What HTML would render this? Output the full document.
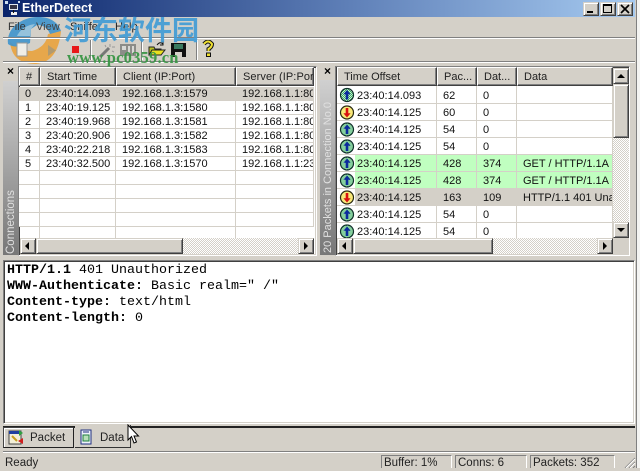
<!DOCTYPE html>
<html><head><meta charset="utf-8"><style>
html,body{margin:0;padding:0;background:#d4d0c8}
body{position:relative;width:640px;height:468px;overflow:hidden;font:11px "Liberation Sans",sans-serif;color:#111}
.a,.a *{box-sizing:border-box}
.a{position:absolute}
.t{position:absolute;white-space:nowrap;line-height:14px}
.sunk{border:1px solid;border-color:#808080 #fff #fff #808080;box-shadow:inset 1px 1px 0 #404040,inset -1px -1px 0 #d4d0c8}
.btn{position:absolute;box-sizing:border-box;background:#d4d0c8;border:1px solid;border-color:#d4d0c8 #404040 #404040 #d4d0c8;box-shadow:inset 1px 1px 0 #fff,inset -1px -1px 0 #808080}
.dith{position:absolute;background:repeating-conic-gradient(#d4d0c8 0 25%,#fff 0 50%) 0 0/2px 2px}
table{position:absolute;border-collapse:separate;border-spacing:0;table-layout:fixed;background:#fff}
td{box-sizing:border-box;padding:0 0 0 6px;border:solid #d4d0c8;border-width:0 1px 1px 0;white-space:nowrap;overflow:hidden;font-size:11px;line-height:12px;color:#111}
.l td{height:14px}
.r td{height:17px;padding-top:2px}
.r td:first-child{padding-left:20px}
.g td{background:#c0ffc0}.g td:first-child{background:linear-gradient(90deg,#fff 0 18px,#c0ffc0 18px)}
.s td{background:#d4d0c8}.s td:first-child{background:linear-gradient(90deg,#fff 0 18px,#d4d0c8 18px)}
.h{position:absolute;box-sizing:border-box;top:67px;height:19px;line-height:18px;background:#d4d0c8;border:1px solid;border-color:#fff #404040 #404040 #fff;box-shadow:inset -1px -1px 0 #808080;padding-left:6px;white-space:nowrap;overflow:hidden;font-size:11px;color:#222}
.strip{position:absolute;width:15px;background:linear-gradient(#d0d0d0,#777)}
.vt{position:absolute;white-space:nowrap;color:#e0e0e0;font-size:11px;transform-origin:0 0;transform:rotate(-90deg)}
.x{position:absolute;font:bold 12px "Liberation Sans",sans-serif;color:#000;line-height:10px}
.ar{position:absolute;width:0;height:0;border:solid transparent}
.m{position:absolute;left:7px;font:13.33px/16px "Liberation Mono",monospace;color:#000;white-space:pre}
.m b{font-weight:bold}
.p{position:absolute;box-sizing:border-box;top:455px;height:13px;border:1px solid;border-color:#808080 #fff #fff #808080;border-bottom:0;padding-left:2px;font-size:11.5px;line-height:15px;color:#222}
.sep{position:absolute;box-sizing:border-box;top:40px;width:2px;height:20px;border-left:1px solid #808080;border-right:1px solid #fff}
</style></head><body>

<!-- window frame -->
<div class="a" style="left:0;top:0;width:3px;height:468px;background:#d4d0c8"></div>
<div class="a" style="left:637px;top:0;width:3px;height:468px;background:#f4f4f2"></div>
<div class="a" style="left:636px;top:0;width:1px;height:468px;background:#808080"></div>

<!-- title bar -->
<div class="a" style="left:3px;top:0;width:632px;height:17px;background:linear-gradient(90deg,#0a246a,#5f80b8 55%,#a6caf0)"></div>
<svg class="a" style="left:4px;top:0" width="18" height="17" viewBox="0 0 18 17"><rect x="5" y="4" width="9" height="6" fill="#dfe6ee"/><rect x="6" y="5" width="7" height="4" fill="#334"/><rect x="7" y="12" width="6" height="3" fill="#eee"/><rect x="1" y="1" width="3" height="3" fill="#cde"/><rect x="14" y="1" width="2" height="2" fill="#cde"/><rect x="9" y="10" width="1" height="3" fill="#111"/></svg>
<div class="t" style="left:22px;top:1px;color:#fff;font-weight:bold;font-size:12.5px;line-height:15px">EtherDetect</div>
<div class="btn" style="left:583px;top:2px;width:16px;height:14px"><div class="a" style="left:3px;top:8px;width:6px;height:2px;background:#000"></div></div>
<div class="btn" style="left:600px;top:2px;width:16px;height:14px"><div class="a" style="left:2px;top:1px;width:9px;height:9px;border:1px solid #000;border-top-width:2px"></div></div>
<div class="btn" style="left:617px;top:2px;width:16px;height:14px"><svg class="a" style="left:2px;top:1px" width="10" height="10" viewBox="0 0 10 10"><path d="M1 1L9 9M9 1L1 9" stroke="#000" stroke-width="1.7"/></svg></div>

<!-- Watermark logo beneath menu text -->
<svg class="a" style="left:6px;top:14px" width="62" height="54" viewBox="0 0 62 54">
<path d="M4 28Q6 50 30 50Q52 48 55 17L42 20Q40 33 26 37Q14 37 4 28Z" fill="#e8a444" opacity=".95"/>
<path d="M2 30C0 14 16 3 32 3C44 3 52 8 55 17L44 20C42 14 37 11 31 11L25 15L24 29C15 33 7 34 2 30Z" fill="#3f94cc" opacity=".9"/>
<path d="M11 22C15 14 22 11 29 10L25 15L24 22Z" fill="#a8cce0" opacity=".8"/>
</svg>

<!-- menu -->
<div class="t" style="left:8px;top:20px;color:#333">File</div>
<div class="t" style="left:36px;top:20px;color:#444">View</div>
<div class="t" style="left:70px;top:20px;color:#222">Sniffer</div>
<div class="t" style="left:115px;top:20px;color:#222">Help</div>
<div class="a" style="left:3px;top:37px;width:632px;height:2px;border-top:1px solid #808080;border-bottom:1px solid #fff"></div>
<div class="a" style="left:3px;top:61px;width:632px;height:2px;border-top:1px solid #808080;border-bottom:1px solid #fff"></div>

<!-- toolbar -->
<svg class="a" style="left:14px;top:41px" width="20" height="18"><path d="M3 2H13V15H3Z" fill="#f0eee8" stroke="#999"/></svg>
<svg class="a" style="left:46px;top:44px" width="12" height="13"><path d="M2 1L10 6.5L2 12Z" fill="#b09a70"/></svg>
<div class="a" style="left:72px;top:46px;width:7px;height:7px;background:#e81818"></div>
<div class="sep" style="left:90px"></div>
<svg class="a" style="left:98px;top:42px" width="17" height="17"><path d="M2 15L11 6" stroke="#777" stroke-width="3"/><path d="M12 2v3M14 5h3M7 3l1 2M14 9l2 1" stroke="#999" fill="none"/></svg>
<div class="a" style="left:120px;top:44px;width:16px;height:12px;background:#8c8c88"></div>
<div class="a" style="left:122px;top:46px;width:4px;height:4px;background:#d8d8d4"></div>
<div class="a" style="left:128px;top:46px;width:2px;height:7px;background:#d8d8d4"></div>
<div class="a" style="left:132px;top:46px;width:2px;height:7px;background:#d8d8d4"></div>
<div class="sep" style="left:141px"></div>
<svg class="a" style="left:148px;top:41px" width="18" height="16" viewBox="0 0 18 16"><path d="M1 6H6L7 8H13V14H1Z" fill="#b8c020" stroke="#222"/><path d="M1 14L4 9H17L13 14Z" fill="#e8e020" stroke="#222"/><path d="M9 4Q12 0 15 3M15 0V4H12" fill="none" stroke="#111"/></svg>
<svg class="a" style="left:171px;top:43px" width="15" height="14" viewBox="0 0 15 14"><rect width="15" height="14" fill="#111"/><rect x="3" y="1" width="9" height="5" fill="#3a7a60"/><rect x="4" y="9" width="7" height="5" fill="#d4d0c8"/></svg>
<div class="sep" style="left:196px"></div>
<svg class="a" style="left:202px;top:40px" width="12" height="17" viewBox="0 0 12 17"><path d="M2 4Q6 -1 10 4Q10 7 6.5 9V11" fill="none" stroke="#111" stroke-width="4"/><path d="M2 4Q6 -1 10 4Q10 7 6.5 9V11" fill="none" stroke="#f0e030" stroke-width="2"/><rect x="4.5" y="13" width="4" height="3.5" fill="#f0e030" stroke="#111"/></svg>

<!-- Left panel -->
<div class="x" style="left:7px;top:66px">×</div>
<div class="strip" style="left:3px;top:81px;height:174px"></div>
<div class="vt" style="left:5px;top:254px;font-size:11.5px">Connections</div>
<div class="a sunk" style="left:18px;top:66px;width:299px;height:190px;background:#fff"></div>
<table class="l" style="left:19px;top:87px;width:295px">
<colgroup><col style="width:21px"><col style="width:76px"><col style="width:120px"><col style="width:78px"></colgroup>
<tr style="background:#d4d0c8"><td>0</td><td>23:40:14.093</td><td>192.168.1.3:1579</td><td>192.168.1.1:80</td></tr>
<tr><td>1</td><td>23:40:19.125</td><td>192.168.1.3:1580</td><td>192.168.1.1:80</td></tr>
<tr><td>2</td><td>23:40:19.968</td><td>192.168.1.3:1581</td><td>192.168.1.1:80</td></tr>
<tr><td>3</td><td>23:40:20.906</td><td>192.168.1.3:1582</td><td>192.168.1.1:80</td></tr>
<tr><td>4</td><td>23:40:22.218</td><td>192.168.1.3:1583</td><td>192.168.1.1:80</td></tr>
<tr><td>5</td><td>23:40:32.500</td><td>192.168.1.3:1570</td><td>192.168.1.1:23</td></tr>
<tr><td></td><td></td><td></td><td></td></tr>
<tr><td></td><td></td><td></td><td></td></tr>
<tr><td></td><td></td><td></td><td></td></tr>
<tr><td></td><td></td><td></td><td></td></tr>
</table>
<div class="a" style="left:39px;top:227px;width:1px;height:11px;background:#d4d0c8"></div>
<div class="a" style="left:115px;top:227px;width:1px;height:11px;background:#d4d0c8"></div>
<div class="a" style="left:235px;top:227px;width:1px;height:11px;background:#d4d0c8"></div>
<div class="h" style="left:19px;width:21px">#</div>
<div class="h" style="left:40px;width:76px">Start Time</div>
<div class="h" style="left:116px;width:120px">Client (IP:Port)</div>
<div class="h" style="left:236px;width:78px;letter-spacing:.08px">Server (IP:Port)</div>
<div class="dith" style="left:20px;top:238px;width:293px;height:16px"></div>
<div class="btn" style="left:20px;top:238px;width:16px;height:16px"></div><div class="ar" style="left:25px;top:242px;border-width:4px 4px 4px 0;border-right-color:#000"></div>
<div class="btn" style="left:36px;top:238px;width:147px;height:16px"></div>
<div class="btn" style="left:298px;top:238px;width:16px;height:16px"></div><div class="ar" style="left:304px;top:242px;border-width:4px 0 4px 4px;border-left-color:#000"></div>

<!-- Right panel -->
<div class="x" style="left:324px;top:66px">×</div>
<div class="strip" style="left:320px;top:80px;height:175px"></div>
<div class="vt" style="left:322px;top:253px">20 Packets in Connection No.0</div>
<div class="a sunk" style="left:335px;top:66px;width:295px;height:190px;background:#fff"></div>
<table class="r" style="left:337px;top:86px;width:276px">
<colgroup><col style="width:100px"><col style="width:40px"><col style="width:40px"><col style="width:96px"></colgroup>
<tr><td style="height:18px">23:40:14.093</td><td>62</td><td>0</td><td></td></tr>
<tr><td>23:40:14.125</td><td>60</td><td>0</td><td></td></tr>
<tr><td>23:40:14.125</td><td>54</td><td>0</td><td></td></tr>
<tr><td>23:40:14.125</td><td>54</td><td>0</td><td></td></tr>
<tr class="g"><td>23:40:14.125</td><td>428</td><td>374</td><td>GET / HTTP/1.1A</td></tr>
<tr class="g"><td>23:40:14.125</td><td>428</td><td>374</td><td>GET / HTTP/1.1A</td></tr>
<tr class="s"><td>23:40:14.125</td><td>163</td><td>109</td><td>HTTP/1.1 401 Unauthorized</td></tr>
<tr><td>23:40:14.125</td><td>54</td><td>0</td><td></td></tr>
<tr><td>23:40:14.125</td><td>54</td><td>0</td><td></td></tr>
</table>
<div class="h" style="left:337px;width:100px">Time Offset</div>
<div class="h" style="left:437px;width:40px">Pac...</div>
<div class="h" style="left:477px;width:40px">Dat...</div>
<div class="h" style="left:517px;width:96px">Data</div>
<svg class="a" style="left:0;top:0" width="640" height="260">
<defs>
<pattern id="gd" width="2" height="2" patternUnits="userSpaceOnUse"><rect width="2" height="2" fill="#3fae68"/><rect width="1" height="1" fill="#c8f0d0"/><rect x="1" y="1" width="1" height="1" fill="#c8f0d0"/></pattern>
<g id="up"><circle r="6.5" fill="url(#gd)" stroke="#10302a" stroke-width="1.2"/><path d="M0 -5L3.6 -0.8H1.3V4.5H-1.3V-0.8H-3.6Z" fill="#0a2a9c"/></g>
<g id="dn"><circle r="6.5" fill="#f8e878" stroke="#2a2a10" stroke-width="1.2"/><path d="M0 5L3.6 0.8H1.3V-4.5H-1.3V0.8H-3.6Z" fill="#d81010"/></g>
</defs>
<use href="#up" x="347" y="95"/><use href="#dn" x="347" y="112.5"/><use href="#up" x="347" y="129.5"/><use href="#up" x="347" y="146.5"/><use href="#up" x="347" y="163.5"/><use href="#up" x="347" y="180.5"/><use href="#dn" x="347" y="197.5"/><use href="#up" x="347" y="214.5"/><use href="#up" x="347" y="231.5"/>
</svg>
<!-- vertical scrollbar -->
<div class="dith" style="left:613px;top:84px;width:16px;height:140px"></div>
<div class="btn" style="left:613px;top:68px;width:16px;height:16px"></div><div class="ar" style="left:617px;top:74px;border-width:0 4px 4px 4px;border-bottom-color:#000"></div>
<div class="btn" style="left:613px;top:84px;width:16px;height:54px"></div>
<div class="btn" style="left:613px;top:222px;width:16px;height:16px"></div><div class="ar" style="left:617px;top:228px;border-width:4px 4px 0 4px;border-top-color:#000"></div>
<!-- horizontal scrollbar -->
<div class="dith" style="left:337px;top:238px;width:276px;height:16px"></div>
<div class="btn" style="left:337px;top:238px;width:16px;height:16px"></div><div class="ar" style="left:342px;top:242px;border-width:4px 4px 4px 0;border-right-color:#000"></div>
<div class="btn" style="left:353px;top:238px;width:140px;height:16px"></div>
<div class="btn" style="left:597px;top:238px;width:16px;height:16px"></div><div class="ar" style="left:603px;top:242px;border-width:4px 0 4px 4px;border-left-color:#000"></div>
<div class="a" style="left:613px;top:238px;width:16px;height:16px;background:#d4d0c8"></div>

<!-- Bottom text pane -->
<div class="a sunk" style="left:3px;top:260px;width:632px;height:164px;background:#fff"></div>
<div class="m" style="top:263px"><b>HTTP/1.1</b> 401 Unauthorized</div>
<div class="m" style="top:279px"><b>WWW-Authenticate:</b> Basic realm=" /"</div>
<div class="m" style="top:295px"><b>Content-type:</b> text/html</div>
<div class="m" style="top:311px"><b>Content-length:</b> 0</div>

<!-- Tabs -->
<div class="a" style="left:3px;top:426px;width:632px;height:2px;background:#222"></div>
<div class="a" style="left:3px;top:427px;width:71px;height:21px;background:#d4d0c8;border:1px solid;border-color:#444 #222 #222 #444;box-shadow:inset 1px 1px 0 #fff"></div>
<div class="a" style="left:75px;top:425px;width:56px;height:23px;background:#d4d0c8;border-bottom:1px solid #333;border-right:1px solid #333"></div>
<svg class="a" style="left:8px;top:429px" width="17" height="16" viewBox="0 0 17 16"><rect x="1" y="2" width="12" height="13" fill="#f4f0d8" stroke="#444"/><rect x="1" y="2" width="12" height="3" fill="#2040a0"/><path d="M11 1l4 3-4 3z" fill="#30a040"/><path d="M15 9l-5 3 5 3z" fill="#d02020"/><path d="M4 7l5 5" stroke="#c8a020" stroke-width="2"/></svg>
<div class="t" style="left:30px;top:431px;font-size:11.5px;color:#222">Packet</div>
<svg class="a" style="left:80px;top:429px" width="13" height="16" viewBox="0 0 13 16"><path d="M1 1H11V15H1Z" fill="#eef2fa" stroke="#203080"/><rect x="3" y="6" width="6" height="6" fill="#b8e0b8" stroke="#208040"/><path d="M3 3H9" stroke="#203080"/></svg>
<div class="t" style="left:100px;top:431px;font-size:11.5px;color:#222">Data</div>
<svg class="a" style="left:127px;top:424px" width="13" height="21" viewBox="0 0 13 21"><path d="M1 1V16L4.5 12.5L7 19L9.5 18L7 12H11.5Z" fill="#fff" stroke="#000"/></svg>

<!-- Status bar -->
<div class="a" style="left:3px;top:451px;width:632px;height:2px;border-top:1px solid #808080;border-bottom:1px solid #fff"></div>
<div class="t" style="left:5px;top:456px;font-size:11.5px;color:#222">Ready</div>
<div class="p" style="left:381px;width:71px">Buffer: 1%</div>
<div class="p" style="left:455px;width:72px">Conns: 6</div>
<div class="p" style="left:530px;width:85px">Packets: 352</div>
<svg class="a" style="left:622px;top:455px" width="14" height="13"><path d="M3 13L13 3M7 13L13 7M11 13L13 11" stroke="#808080" fill="none"/><path d="M4 13L13 4M8 13L13 8" stroke="#fff" fill="none"/></svg>

<!-- Watermark text -->
<div class="t" style="left:64px;top:14px;font:bold 27px/30px 'Noto Sans CJK SC',sans-serif;color:#3f9bd6;opacity:.9">河东软件园</div>
<div class="t" style="left:67px;top:49px;font:bold 16.5px/17px 'Liberation Serif',serif;color:#3a9646;opacity:.95;letter-spacing:.2px">www.pc0359.cn</div>
</body></html>
